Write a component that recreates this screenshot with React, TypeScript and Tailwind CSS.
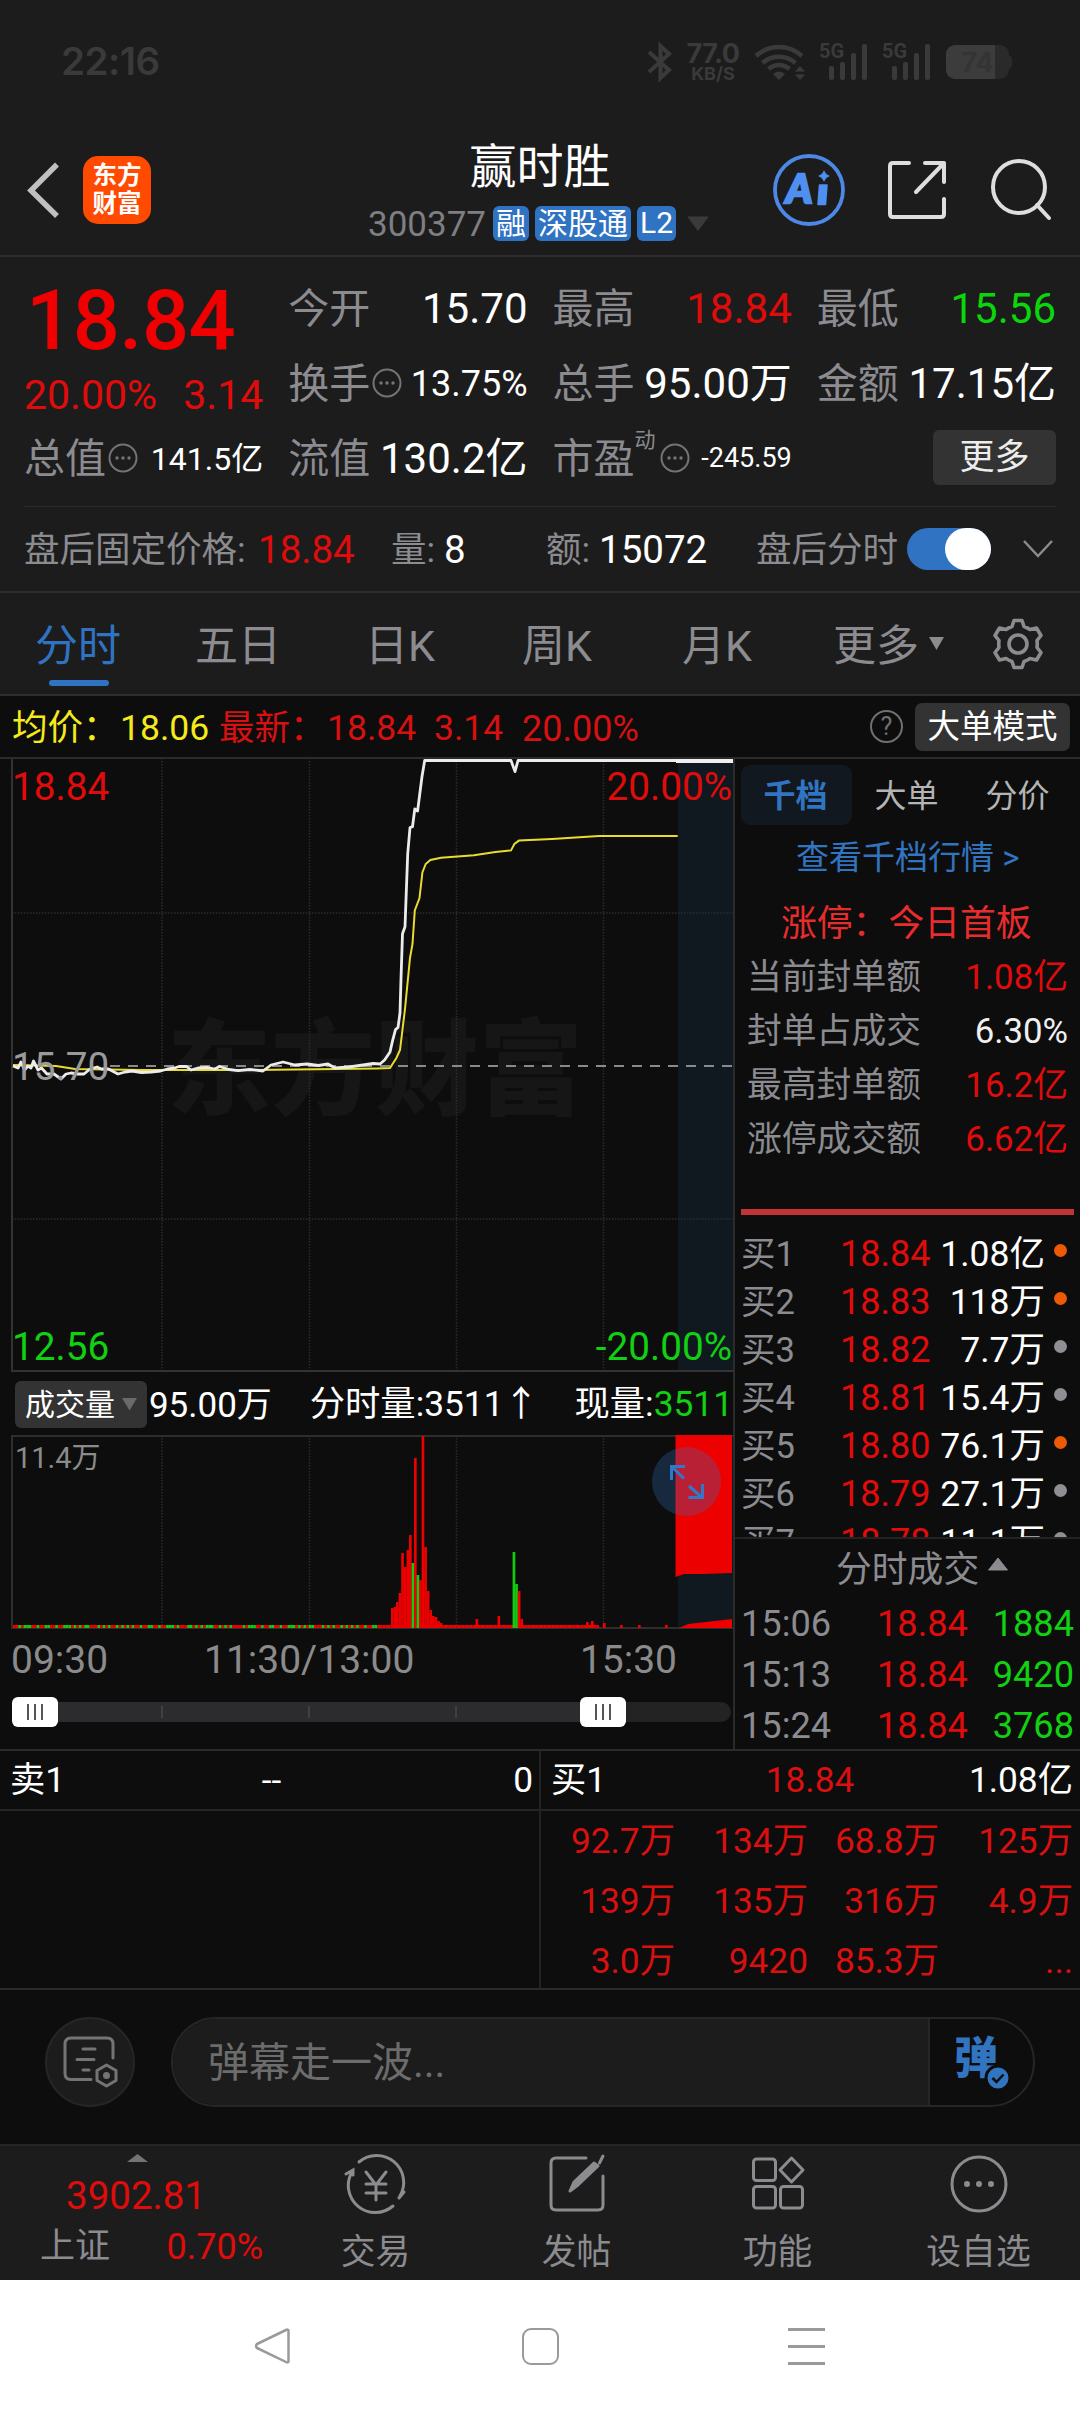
import React from 'react'

type Level = { name: string; price: string; amount: string; hot: boolean }
type Bar = [x: number, h: number, up: boolean]

const levels: Level[] = [
  { name: '买1', price: '18.84', amount: '1.08亿', hot: true },
  { name: '买2', price: '18.83', amount: '118万', hot: true },
  { name: '买3', price: '18.82', amount: '7.7万', hot: false },
  { name: '买4', price: '18.81', amount: '15.4万', hot: false },
  { name: '买5', price: '18.80', amount: '76.1万', hot: true },
  { name: '买6', price: '18.79', amount: '27.1万', hot: false },
  { name: '买7', price: '18.78', amount: '11.1万', hot: false },
]

const sealRows = [
  { label: '当前封单额', value: '1.08亿', color: 'text-[#e00b0b]' },
  { label: '封单占成交', value: '6.30%', color: 'text-[#f0f0f0]' },
  { label: '最高封单额', value: '16.2亿', color: 'text-[#e00b0b]' },
  { label: '涨停成交额', value: '6.62亿', color: 'text-[#e00b0b]' },
]

const trades = [
  ['15:06', '18.84', '1884'],
  ['15:13', '18.84', '9420'],
  ['15:24', '18.84', '3768'],
]

const queue = ['92.7万', '134万', '68.8万', '125万', '139万', '135万', '316万', '4.9万', '3.0万', '9420', '85.3万', '...']

const pricePoints =
  '13,308 18,310 21,304 24.5,312 28,308 31,310 33.5,303 38,312 41.5,310 47,316 54,316 61,321 66,316 71,315 78,316 84,316 90,311 97,309 101.5,311 108.5,311 118,316 125,314 132,313 141.5,314.5 151,314 160.5,313 167.5,311 174.6,310 179,308.5 186.5,308.5 191,312 198,310 207.6,309.5 214.7,311 219.5,308.5 229,311.5 238,312.7 250,311.5 263,313 271,307 283,304 295,307 307,306 318.5,307.5 328,306 335,310 349,309 363,307 373,305.5 380,306 384.6,302 390,294 392.6,282.6 395.5,271.6 398,269.5 400,255 401,220.6 402.5,175.7 405,168.7 407.7,96 410,69.5 412.5,68.7 414.8,51 417.6,53 422,18.5 424.7,2.5 511,2.5 515,13.6 518,2.5 676,2.5'

const avgPoints =
  '13,307 56,308 75,311 141,312 250,312 377,310.4 390,310 396.4,300 400,292 405,251 410,200 412.5,186 414.8,152.4 419.5,140 422.4,114.4 425.7,106 430.4,102 441,99.8 474,97.3 495.5,94 511,92.4 514.4,86 519,82.6 552,81 599,78 677.7,78'

const spikes: Bar[] = [
  [391, 20, true], [393.5, 21, true], [396, 26, true], [398.6, 35, true], [401.2, 75, true], [404, 61, true],
  [406.6, 78, true], [409, 93, true], [411.6, 65, false], [414, 170, true], [416.6, 53, false], [419, 48, true],
  [421.6, 192, true], [424.2, 81, true], [426.8, 37, true], [429.4, 18, true], [432, 12, true], [434.6, 11, true],
  [437.2, 7, true], [439.8, 5, true], [475.5, 9, true], [497.5, 12, true], [512.6, 76, false], [515.2, 44, false],
  [517.8, 37, true], [520.4, 9, true], [586, 6, true], [591, 7, true], [603, 5, true], [620, 3, true], [638, 3, true], [665, 3, true],
]

// quiet minutes: low bars, mixed colours until the run-up starts
const quiet: Bar[] = Array.from({ length: 222 }, (_, i) => {
  const x = 13 + i * 2.64
  const green = x < 382 && [1, 4, 5, 9, 11, 12, 15, 16].includes((i * 7 + (i % 5)) % 17)
  return [x, 3, !green]
})

const Dots = () => (
  <svg width="30" height="30" viewBox="0 0 30 30" fill="none" className="ml-[2px] shrink-0">
    <circle cx="15" cy="15" r="13.5" stroke="#747478" strokeWidth="2" />
    <circle cx="9" cy="15" r="1.7" fill="#747478" />
    <circle cx="15" cy="15" r="1.7" fill="#747478" />
    <circle cx="21" cy="15" r="1.7" fill="#747478" />
  </svg>
)

const StatusBar = () => (
  <div className="flex h-[124px] items-center justify-between pl-[61px] pr-[68px] text-[#3a3a3a]">
    <span className="font-['Inter'] text-[38.5px] font-semibold tracking-[-0.5px]">22:16</span>
    <div className="flex items-center">
      <svg width="24" height="40" viewBox="0 0 24 40" fill="none" stroke="#3a3a3a" strokeWidth="4">
        <path d="M1 10 L21 28 L12.5 36 V4 L21 12 L1 30" />
      </svg>
      <div className="ml-[14px] flex w-[54px] flex-col items-center font-['Inter'] font-bold">
        <span className="text-[27px] leading-[22px] tracking-[-0.5px]">77.0</span>
        <span className="text-[18px] leading-[17px]">KB/S</span>
      </div>
      <svg width="52" height="38" viewBox="0 0 52 38" fill="none" stroke="#3a3a3a" strokeWidth="4.5" className="ml-[14px]">
        <path d="M2 13 A34 34 0 0 1 48 13" />
        <path d="M8.5 20 A25 25 0 0 1 41.5 20" />
        <path d="M14.5 26 A15.5 15.5 0 0 1 35.5 26" />
        <path d="M25 37 L19 31 Q25 26 31 31 Z" fill="#3a3a3a" stroke="none" />
        <path d="M46 23 L51 28.5 H41 Z M46 37 L51 31.5 H41 Z" fill="#3a3a3a" stroke="none" />
      </svg>
      {[0, 1].map((n) => (
        <div key={n} className="relative ml-[13px] h-[38px] w-[50px]">
          <span className="absolute left-0 top-[-2px] font-['Roboto'] text-[20px] font-bold leading-[20px]">5G</span>
          <svg width="50" height="38" viewBox="0 0 50 38" fill="#3a3a3a">
            <rect x="10" y="23" width="5" height="14" rx="2" />
            <rect x="21" y="19" width="5" height="18" rx="2" />
            <rect x="32" y="10" width="5" height="27" rx="2" />
            <rect x="43" y="1" width="5" height="36" rx="2" />
          </svg>
        </div>
      ))}
      <div className="ml-[14px] flex items-center">
        <div className="flex h-[34px] w-[63px] items-center justify-center rounded-[9px] bg-linear-to-r from-[#3c3c3c] from-78% to-[#2a2a2a] to-78%">
          <span className="font-['Inter'] text-[27px] font-bold leading-none text-[#343434]">74</span>
        </div>
        <div className="h-[12px] w-[3px] rounded-r bg-[#2a2a2a]" />
      </div>
    </div>
  </div>
)

const Header = () => (
  <div className="flex h-[133px] border-b-2 border-[#2e2e2e]">
    <div className="flex w-[368px] items-center pl-[26px]">
      <svg width="34" height="56" viewBox="0 0 34 56" fill="none" stroke="#c0c0c0" strokeWidth="5.5">
        <path d="M31 2.500 L5 28.500 L31 54" />
      </svg>
      <div className="ml-[23px] flex h-[68px] w-[68px] flex-col items-center justify-center rounded-[15px] bg-[#ff4a00] text-[24.5px] font-bold leading-[28px] text-white">
        <span>东方</span>
        <span>财富</span>
      </div>
    </div>
    <div className="flex w-[344px] flex-col items-center">
      <span className="mt-[15px] text-[47px] leading-[56px] text-white">赢时胜</span>
      <div className="mt-[9px] flex h-[38px] w-full items-center leading-none">
        <span className="w-[125px] pt-[2px] text-[35px] text-[#7e7e83]">300377</span>
        <span className="flex h-[35px] w-[36px] items-center justify-center rounded-[6px] bg-[#2f73c2] pt-[2px] text-[30px] text-white">融</span>
        <span className="ml-[6px] flex h-[35px] w-[96px] items-center justify-center rounded-[6px] bg-[#2f73c2] pt-[2px] text-[30px] text-white">深股通</span>
        <span className="ml-[6px] flex h-[35px] w-[39px] items-center justify-center rounded-[6px] bg-[#2f73c2] text-[30px] text-white">L2</span>
        <svg width="22" height="15" viewBox="0 0 22 15" className="ml-[11px]">
          <path d="M1 1 H21 L11 14.5 Z" fill="#3a3a3a" stroke="#3a3a3a" />
        </svg>
      </div>
    </div>
    <div className="flex grow items-center pl-[60px]">
      <svg width="74" height="74" viewBox="0 0 74 74" fill="none">
        <circle cx="37" cy="37" r="34" stroke="#4d88e6" strokeWidth="3.8" />
        <text x="14" y="50" fill="#4f8ff0" stroke="#4f8ff0" strokeWidth="2.5" fontFamily="Lato" fontWeight="900" fontStyle="italic" fontSize="40">A</text>
        <path d="M47.5 32 H55 L53.5 51.5 H46 Z" fill="#4f8ff0" stroke="#4f8ff0" strokeWidth="1.5" strokeLinejoin="round" />
        <path d="M52 17 Q53.5 21.5 58 23 Q53.5 24.5 52 29 Q50.5 24.5 46 23 Q50.5 21.5 52 17 Z" fill="#4f8ff0" />
      </svg>
      <svg width="60" height="60" viewBox="0 0 60 60" fill="none" stroke="#dedede" strokeWidth="4" strokeLinecap="round" strokeLinejoin="round" className="ml-[41px]">
        <path d="M22 3 H6 Q3 3 3 6 V54 Q3 57 6 57 H54 Q57 57 57 54 V39" />
        <path d="M38 3 H57 V22 M57 3 L29 32" />
      </svg>
      <svg width="62" height="62" viewBox="0 0 62 62" fill="none" stroke="#dedede" strokeWidth="4" strokeLinecap="round" className="ml-[43px]">
        <circle cx="29" cy="28" r="26" />
        <path d="M47 46 L59 59" />
      </svg>
    </div>
  </div>
)

const QuoteCell = ({ label, value, color, size, info, sup }: { label: string; value: string; color: string; size: string; info?: boolean; sup?: string }) => (
  <div className="flex h-[75px] items-center justify-between whitespace-nowrap leading-none">
    <div className="flex items-center text-[41px] text-[#8b8b90]">
      <span className="pt-[4px]">{label}</span>
      {sup && <span className="-mt-[34px] mr-[2px] text-[21px]">{sup}</span>}
      {info && <Dots />}
    </div>
    <span className={`pt-[2px] ${color} ${size}`}>{value}</span>
  </div>
)

const Quote = () => (
  <div className="grid h-[249px] grid-cols-4 gap-x-[25px] px-[24px] pt-[13px]">
    <div className="flex flex-col">
      <div className="flex h-[100px] items-center pl-[2px] text-[83px] font-medium leading-none tracking-[-0.5px] text-[#f00000]">18.84</div>
      <div className="flex h-[50px] items-center justify-between pt-[1px] text-[41px] leading-none text-[#e00b0b]">
        <span>20.00%</span>
        <span>3.14</span>
      </div>
      <QuoteCell label="总值" value="141.5亿" color="text-white" size="text-[32px]" info />
    </div>
    <div>
      <QuoteCell label="今开" value="15.70" color="text-white" size="text-[42px]" />
      <QuoteCell label="换手" value="13.75%" color="text-white" size="text-[36px]" info />
      <QuoteCell label="流值" value="130.2亿" color="text-white" size="text-[42px]" />
    </div>
    <div>
      <QuoteCell label="最高" value="18.84" color="text-[#e00b0b]" size="text-[42px]" />
      <QuoteCell label="总手" value="95.00万" color="text-white" size="text-[42px]" />
      <QuoteCell label="市盈" value="-245.59" color="text-white" size="text-[27px]" info sup="动" />
    </div>
    <div>
      <QuoteCell label="最低" value="15.56" color="text-[#0bd60b]" size="text-[42px]" />
      <QuoteCell label="金额" value="17.15亿" color="text-white" size="text-[42px]" />
      <div className="flex h-[75px] items-center justify-end">
        <button className="h-[55px] w-[123px] rounded-[6px] bg-[#333333] text-[35px] leading-none text-[#ededed]">更多</button>
      </div>
    </div>
  </div>
)

const AfterHours = () => (
  <div className="flex h-[86px] items-center whitespace-nowrap border-b-2 border-[#2e2e2e] pl-[24px] text-[35.5px] leading-none text-[#8b8b90]">
    <span className="w-[234px] pt-[4px]">盘后固定价格:</span>
    <span className="w-[133px] pt-[2px] text-[38.5px] text-[#e00b0b]">18.84</span>
    <span className="w-[53px] pt-[4px]">量:</span>
    <span className="w-[102px] pt-[2px] text-[38.5px] text-white">8</span>
    <span className="w-[53px] pt-[4px]">额:</span>
    <span className="w-[157px] pt-[2px] text-[38.5px] text-white">15072</span>
    <span className="w-[151px] pt-[4px]">盘后分时</span>
    <div className="flex h-[42px] w-[84px] justify-end rounded-full bg-[#2f73c2]">
      <div className="h-[42px] w-[46px] rounded-full bg-white" />
    </div>
    <svg width="30" height="18" viewBox="0 0 30 18" fill="none" stroke="#8b8b90" strokeWidth="2.5" className="ml-[32px]">
      <path d="M1 1 L15 16 L29 1" />
    </svg>
  </div>
)

const PeriodTabs = () => (
  <div className="flex h-[103px] items-center whitespace-nowrap border-b-2 border-[#2e2e2e] pl-[35px] text-[43px] leading-none text-[#8b8b90]">
    <div className="relative w-[160px] pt-[6px] text-[#2f73c2]">
      分时
      <div className="absolute left-[14px] top-[61px] h-[6px] w-[60px] rounded-full bg-[#2f73c2]" />
    </div>
    <span className="w-[170px] pt-[6px]">五日</span>
    <span className="w-[157px] pt-[6px]">日K</span>
    <span className="w-[160px] pt-[6px]">周K</span>
    <span className="w-[151px] pt-[6px]">月K</span>
    <span className="w-[95px] pt-[6px]">更多</span>
    <svg width="17" height="14" viewBox="0 0 17 14">
      <path d="M1 0 H16 L8.5 13 Z" fill="#8b8b90" />
    </svg>
    <svg width="52" height="52" viewBox="0 0 52 52" fill="none" stroke="#8b8b90" strokeWidth="3.6" strokeLinejoin="round" className="ml-[47px]">
      <path d="M22 2.5 H30 L32 8.5 Q35 9.5 38 11.5 L44.5 10 L49 17.5 L45 22.5 Q45.5 26 45 29.5 L49 34.5 L44.5 42 L38 40.5 Q35 42.5 32 43.5 L30 49.5 H22 L20 43.5 Q17 42.5 14 40.5 L7.5 42 L3 34.5 L7 29.5 Q6.5 26 7 22.5 L3 17.5 L7.5 10 L14 11.5 Q17 9.5 20 8.5 Z" />
      <circle cx="26" cy="26" r="9" />
    </svg>
  </div>
)

const AverageRow = () => (
  <div className="flex h-[63px] items-center whitespace-nowrap border-b-2 border-[#2b2b2b] pl-[12px] pr-[10px] text-[35.5px] leading-none text-[#d8100f]">
    <span className="w-[108px] pt-[4px] text-[#f5ea1c]">均价：</span>
    <span className="w-[99px] pt-[4px] text-[#f5ea1c]">18.06</span>
    <span className="w-[108px] pt-[4px]">最新：</span>
    <span className="w-[107px] pt-[4px]">18.84</span>
    <span className="w-[88px] pt-[4px]">3.14</span>
    <span className="pt-[4px] text-[36px]">20.00%</span>
    <div className="ml-auto flex items-center">
      <div className="flex h-[33px] w-[33px] items-center justify-center rounded-full border-2 border-[#707074] text-[25px] text-[#707074]">?</div>
      <button className="ml-[12px] h-[48px] w-[155px] rounded-[7px] bg-[#333333] pt-[2px] text-[32.5px] text-white">大单模式</button>
    </div>
  </div>
)

const PriceChart = () => (
  <div className="relative h-[613px] w-[734px] text-[38.7px] leading-none">
    <div className="absolute left-[167px] top-[251px] font-['Noto_Sans_CJK_SC'] text-[104px] font-black text-[#161616]">东方财富</div>
    <svg width="734" height="613" viewBox="0 1 734 613" fill="none" className="absolute left-0 top-0">
      <rect x="678" y="0" width="55" height="613" fill="#101820" />
      <path d="M162 0 V613 M309.5 0 V613 M456.5 0 V613 M603.5 0 V613 M12 155 H733 M12 461 H733" stroke="#2c2c2c" strokeWidth="1.5" strokeDasharray="1.5 1.5" />
      <path d="M12 0 V613 H733" stroke="#333333" strokeWidth="2" />
      <path d="M110 308 H733" stroke="#8a8a8a" strokeWidth="2" strokeDasharray="10 8" />
      <polyline points={avgPoints} stroke="#e8dc30" strokeWidth="2" />
      <polyline points={pricePoints} stroke="#ececec" strokeWidth="2.8" strokeLinejoin="round" />
      <path d="M676 3 H733" stroke="#f0f0f0" strokeWidth="4" />
    </svg>
    <span className="absolute left-[12px] top-[9px] text-[#e00b0b]">18.84</span>
    <span className="absolute right-[2px] top-[9px] text-[#e00b0b]">20.00%</span>
    <span className="absolute left-[12px] top-[289px] text-[#9a9a9a]">15.70</span>
    <span className="absolute left-[12px] top-[569px] text-[#12d012]">12.56</span>
    <span className="absolute right-[2px] top-[569px] text-[#12d012]">-20.00%</span>
  </div>
)

const VolumeChart = () => (
  <div className="relative h-[194px] w-[734px]">
    <svg width="734" height="194" viewBox="0 0 734 194" fill="none">
      <rect x="678" y="0" width="55" height="193" fill="#101820" />
      <path d="M162 0 V193 M309.5 0 V193 M456.5 0 V193 M603.5 0 V193" stroke="#2c2c2c" strokeWidth="1.5" strokeDasharray="1.5 1.5" />
      <path d="M733 1 H12 V193 H733" stroke="#2e2e2e" strokeWidth="2" />
      {[...quiet, ...spikes].map(([x, h, up], i) => (
        <rect key={i} x={x} y={193 - h} width="2.7" height={h} fill={up ? '#ec0000' : '#12cc12'} />
      ))}
      <path d="M675.5 0 H732 V138 L704 139 L684 139 L675.5 142 Z" fill="#ec0000" />
      <path d="M679 193 L688 189 L732 184 V193 Z" fill="#ec0000" />
      <circle cx="686.5" cy="46.5" r="34.5" fill="#3178c8" fillOpacity="0.27" />
      <path d="M671.5 45 V31.5 H685 M672 32 L684 43.5 M689 51 L701.5 62 M702.5 49 V62.5 H688.5" stroke="#3178c8" strokeWidth="3" />
    </svg>
    <span className="absolute left-[15px] top-[9px] text-[29px] leading-none text-[#8b8b8b]">11.4万</span>
  </div>
)

const Thumb = () => (
  <div className="flex h-[30px] w-[46px] items-center justify-center gap-[5px] rounded-[6px] bg-white">
    <div className="h-[16px] w-[2px] bg-[#555]" />
    <div className="h-[16px] w-[2px] bg-[#555]" />
    <div className="h-[16px] w-[2px] bg-[#555]" />
  </div>
)

const ChartColumn = () => (
  <div className="flex w-[735px] flex-col border-r-2 border-[#2b2b2b]">
    <PriceChart />
    <div className="flex h-[63px] items-center whitespace-nowrap pl-[15px] pt-[2px] text-[35.3px] leading-none text-white">
      <div className="flex h-[47px] w-[132px] items-center rounded-[6px] bg-[#333333] pl-[10px] text-[30px]">
        成交量
        <svg width="16" height="13" viewBox="0 0 16 13" className="ml-[7px]">
          <path d="M0 0 H15 L7.5 12.5 Z" fill="#6a6a6a" />
        </svg>
      </div>
      <span className="ml-[2px] w-[161px] pt-[1px] text-[35px]">95.00万</span>
      <span className="w-[265px] pt-[1px]">分时量:3511↑</span>
      <span className="pt-[1px]">现量:<span className="text-[#12d012]">3511</span></span>
    </div>
    <VolumeChart />
    <div className="flex h-[62px] items-center text-[39px] leading-none text-[#8b8b8b]">
      <span className="w-[193px] pl-[11px]">09:30</span>
      <span className="pl-[11px]">11:30/13:00</span>
      <span className="ml-auto pr-[56px]">15:30</span>
    </div>
    <div className="flex h-[42px] items-center pl-[12px]">
      <div className="relative flex h-[20px] w-[719px] items-center rounded-r-full bg-[#232324]">
        <div className="flex h-[20px] w-[591px] items-center justify-end gap-[145px] bg-[#2c2c2e] pr-[146px]">
          <div className="h-[12px] w-[2px] bg-[#404042]" />
          <div className="h-[12px] w-[2px] bg-[#404042]" />
          <div className="h-[12px] w-[2px] bg-[#404042]" />
        </div>
        <div className="absolute left-0 top-[-5px]"><Thumb /></div>
        <div className="absolute left-[568px] top-[-5px]"><Thumb /></div>
      </div>
    </div>
  </div>
)

const OrderBook = () => (
  <div className="flex w-[345px] flex-col whitespace-nowrap leading-none">
    <div className="mt-[6px] flex h-[60px] pl-[6px] text-[32px] text-[#b4b4b4]">
      <span className="flex w-[111px] items-center justify-center rounded-[9px] bg-[#111820] pr-[2px] pt-[3px] font-bold text-[#3174c0]">千档</span>
      <span className="flex w-[111px] items-center justify-center pr-[2px] pt-[3px]">大单</span>
      <span className="flex w-[111px] items-center justify-center pr-[2px] pt-[3px]">分价</span>
    </div>
    <div className="flex h-[66px] items-center pl-[61px] text-[33px] text-[#3174c0]">查看千档行情 &gt;</div>
    <div className="flex h-[60px] items-center pl-[46px] pt-[10px] text-[35.8px] text-[#e82c2c]">涨停：今日首板</div>
    {sealRows.map((row) => (
      <div key={row.label} className="flex h-[54px] items-center justify-between pl-[12px] pr-[12px] pt-[2px] text-[34.8px] text-[#8b8b90]">
        <span>{row.label}</span>
        <span className={row.color}>{row.value}</span>
      </div>
    ))}
    <div className="ml-[6px] mt-[44px] h-[6px] w-[333px] bg-[#c23434]" />
    <div className="mt-[14px] h-[310px] overflow-hidden text-[36px]">
      {levels.map((lv) => (
        <div key={lv.name} className="flex h-[48px] items-center">
          <span className="w-[105px] pl-[6px] pt-[3px] text-[34.5px] text-[#8b8b90]">{lv.name}</span>
          <span className="pt-[2px] text-[#e00b0b]">{lv.price}</span>
          <span className="ml-auto pt-[3px] text-[35.5px] text-white">{lv.amount}</span>
          <span className={`mb-[4px] ml-[9px] mr-[13px] h-[13px] w-[13px] rounded-full ${lv.hot ? 'bg-[#ec5a05]' : 'bg-[#8e8e93]'}`} />
        </div>
      ))}
    </div>
    <div className="flex h-[60px] items-center border-t-2 border-[#232323] pl-[101px] text-[35.8px] text-[#8b8b90]">
      <span className="pt-[6px]">分时成交</span>
      <svg width="22" height="14" viewBox="0 0 22 14" className="mb-[8px] ml-[8px]">
        <path d="M11 1 L20.5 13 H1.5 Z" fill="#8b8b90" stroke="#8b8b90" strokeLinejoin="round" />
      </svg>
    </div>
    {trades.map(([time, price, vol]) => (
      <div key={time} className="flex h-[51px] items-center pr-[6px] pt-[4px] text-[36.2px]">
        <span className="w-[142px] pl-[6px] text-[#8b8b90]">{time}</span>
        <span className="text-[#e00b0b]">{price}</span>
        <span className="ml-auto text-[#12d012]">{vol}</span>
      </div>
    ))}
  </div>
)

const BestQueue = () => (
  <div className="flex h-[241px] whitespace-nowrap border-y-2 border-[#2b2b2b] text-[35.3px] leading-none text-white">
    <div className="w-[541px] border-r-2 border-[#222222]">
      <div className="grid h-[60px] grid-cols-3 items-center border-b-2 border-[#262626] pl-[10px] pr-[6px] pt-[2px]">
        <span>卖1</span>
        <span className="text-center">--</span>
        <span className="text-right">0</span>
      </div>
    </div>
    <div className="w-[539px]">
      <div className="grid h-[60px] grid-cols-3 items-center border-b-2 border-[#262626] pl-[10px] pr-[7px] pt-[2px]">
        <span>买1</span>
        <span className="pr-[4px] text-center text-[#d8100f]">18.84</span>
        <span className="text-right">1.08亿</span>
      </div>
      <div className="grid grid-cols-[134px_133px_131px_134px] pr-[7px]">
        {queue.map((q, i) => (
          <span key={i} className="flex h-[60px] items-center justify-end pt-[2px] text-[#d8100f]">{q}</span>
        ))}
      </div>
    </div>
  </div>
)

const CommentBar = () => (
  <div className="flex h-[154px] items-center pb-[10px] pl-[45px]">
    <div className="flex h-[90px] w-[90px] items-center justify-center rounded-full border-2 border-[#262626] bg-[#1c1c1c]">
      <svg width="56" height="52" viewBox="0 0 56 52" fill="none" stroke="#747474" strokeWidth="3" strokeLinecap="round">
        <path d="M29 43.5 H9 Q3 43.5 3 37.5 V8 Q3 2 9 2 H45 Q51 2 51 8 V22" />
        <path d="M21 13 H33 M15 23.5 H32 M21 34 H27" />
        <path d="M44.5 29 L54 34.5 V44.5 L44.5 50 L35 44.5 V34.5 Z" strokeLinejoin="round" />
        <circle cx="44.5" cy="39.5" r="2" fill="#747474" />
      </svg>
    </div>
    <div className="ml-[36px] flex h-[90px] w-[864px] overflow-hidden rounded-full border-2 border-[#262626]">
      <div className="flex w-[757px] items-center border-r-2 border-[#262626] bg-[#1c1c1c] pl-[35px] pt-[2px] text-[41px] leading-none text-[#6c6c6c]">弹幕走一波...</div>
      <div className="relative flex grow items-center pb-[6px] pl-[24px] text-[44px] font-black leading-none text-[#3174c0]">
        弹
        <svg width="28" height="28" viewBox="0 0 28 28" className="absolute left-[54px] top-[45px]">
          <circle cx="14" cy="14" r="12" fill="#3174c0" stroke="#0d0d0d" strokeWidth="3" />
          <path d="M8.5 14 L12.5 18 L19.5 10.5" fill="none" stroke="#0d0d0d" strokeWidth="2.5" />
        </svg>
      </div>
    </div>
  </div>
)

const NavItem = ({ label, children }: { label: string; children: React.ReactNode }) => (
  <div className="flex w-[201px] flex-col items-center">
    <svg width="64" height="64" viewBox="0 0 64 64" fill="none" stroke="#8b8b90" strokeWidth="3" strokeLinecap="round" className="mt-[6px]">
      {children}
    </svg>
    <span className="mt-[18px] text-[34.8px] leading-[36px] text-[#8b8b90]">{label}</span>
  </div>
)

const BottomBar = () => (
  <div className="flex h-[136px] border-t-2 border-[#262626] bg-[#1c1c1c]">
    <div className="flex w-[275px] flex-col leading-none">
      <svg width="21" height="8" viewBox="0 0 21 8" className="ml-[127px] mt-[8px]">
        <path d="M0 8 L10.5 0 L21 8 Z" fill="#747478" />
      </svg>
      <span className="mt-[15px] pl-[66px] text-[38.5px] text-[#e00b0b]">3902.81</span>
      <div className="mt-[13px] flex items-center justify-between pl-[40px] pr-[12px] text-[35px]">
        <span className="text-[#8b8b90]">上证</span>
        <span className="text-[36px] text-[#e00b0b]">0.70%</span>
      </div>
    </div>
    <NavItem label="交易">
      <path d="M15 10 A27 27 0 0 1 56 44 M57.5 41 L55 46 M60 40 L55 46" />
      <path d="M49 54 A27 27 0 0 1 8 20 M2 22 L9 18 V23" />
      <path d="M22 20 L32 33 L42 20 M32 33 V48 M22 32 H42 M22 41 H42" />
    </NavItem>
    <NavItem label="发帖">
      <path d="M41 6 H11 Q6 6 6 11 V53 Q6 58 11 58 H53 Q58 58 58 53 V24" />
      <path d="M58 4 L54.5 11 M53 14 L33 33 L25 39 L29 30 L49 11 Z" fill="#8b8b90" strokeLinejoin="round" />
    </NavItem>
    <NavItem label="功能">
      <rect x="7.500" y="7" width="22" height="21.500" rx="3" />
      <rect x="7.500" y="34.500" width="22" height="21.500" rx="3" />
      <rect x="34.500" y="34.500" width="22" height="21.500" rx="3" />
      <path d="M45.5 6 L57 18 L45.5 30 L34 18 Z" strokeLinejoin="round" />
    </NavItem>
    <NavItem label="设自选">
      <circle cx="32" cy="32" r="27" />
      <circle cx="20" cy="32" r="1.5" fill="#8b8b90" />
      <circle cx="32" cy="32" r="1.5" fill="#8b8b90" />
      <circle cx="44" cy="32" r="1.5" fill="#8b8b90" />
    </NavItem>
  </div>
)

const SystemNav = () => (
  <div className="flex h-[132px] items-center justify-between bg-white pl-[254px] pr-[255px]">
    <svg width="38" height="38" viewBox="0 0 38 38" fill="none" stroke="#9a9a9a" strokeWidth="2.5" strokeLinejoin="round">
      <path d="M34.5 3.5 V34.5 Q34 36 32 35 L3 21 Q1 19 3 17 L32 3 Q34 2 34.5 3.5 Z" />
    </svg>
    <div className="h-[37px] w-[37px] rounded-[9px] border-[2.5px] border-[#9a9a9a]" />
    <div className="flex flex-col gap-[14px]">
      <div className="h-[3px] w-[37px] bg-[#9a9a9a]" />
      <div className="h-[3px] w-[37px] bg-[#9a9a9a]" />
      <div className="h-[3px] w-[37px] bg-[#9a9a9a]" />
    </div>
  </div>
)

const App = () => {
  return (
    <div className="flex h-[2412px] w-[1080px] flex-col overflow-hidden bg-[#0d0d0d] font-['Roboto','Noto_Sans_CJK_SC',sans-serif]">
      <div className="bg-[#1c1c1c]">
        <StatusBar />
        <Header />
        <Quote />
        <div className="mx-[24px] h-px bg-[#2a2a2a]" />
        <AfterHours />
        <PeriodTabs />
      </div>
      <AverageRow />
      <div className="flex h-[990px]">
        <ChartColumn />
        <OrderBook />
      </div>
      <BestQueue />
      <CommentBar />
      <BottomBar />
      <SystemNav />
    </div>
  )
}

export default App
